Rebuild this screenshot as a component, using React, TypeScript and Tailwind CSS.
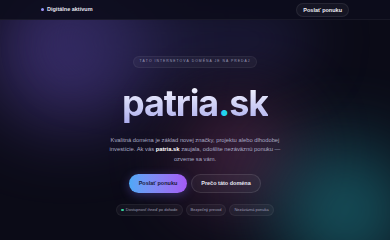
const chips = [
  { label: "Dostupnosť ihneď po dohode", dot: true },
  { label: "Bezpečný prevod", dot: false },
  { label: "Nezáväzná ponuka", dot: false },
];

export default function App() {
  return (
    <div
      className="relative h-[240px] w-[390px] overflow-hidden bg-[#0b0b17] text-white"
      style={{ fontFamily: "'Liberation Sans', Arial, sans-serif" }}
    >
      {/* glows */}
      <div className="pointer-events-none absolute -left-[10px] -top-[20px] h-[140px] w-[160px] rounded-full bg-[#4a3a8a] opacity-75 blur-[40px]" />
      <div className="pointer-events-none absolute left-[60px] top-[10px] h-[60px] w-[250px] rounded-full bg-[#2a2756] opacity-60 blur-[30px]" />
      <div className="pointer-events-none absolute left-[180px] top-[105px] h-[100px] w-[120px] rounded-full bg-[#5e2c52] opacity-65 blur-[35px]" />
      <div className="pointer-events-none absolute left-[280px] top-[150px] h-[120px] w-[130px] rounded-full bg-[#1a6e78] opacity-80 blur-[40px]" />

      <div className="relative flex h-full flex-col">
        <header className="border-b border-white/5 bg-[#0c0c1c]/90">
          <div className="mx-auto flex h-[19px] w-[308px] items-center justify-between">
            <div className="flex items-center gap-[3px]">
              <span className="h-[3px] w-[3px] rounded-full bg-gradient-to-br from-[#60a5fa] to-[#c084fc]" />
              <span className="text-[5.5px] font-semibold text-[#e4e4f0]">Digitálne aktívum</span>
            </div>
            <button className="mt-[1px] flex h-[14px] items-center rounded-full border border-white/[0.07] bg-white/[0.04] px-[6px] text-[5.5px] font-semibold text-[#ececf5]">
              Poslať ponuku
            </button>
          </div>
        </header>

        <main className="flex flex-col items-center">
          <div className="mt-[36px] flex h-[12px] items-center rounded-full border border-white/5 bg-white/[0.04] px-[5px] text-[3.4px] font-medium uppercase tracking-[0.3em] text-[#9a9ab8]">
            Táto internetová doména je na predaj
          </div>

          <h1
            className="mt-[13px] text-[36px] font-bold leading-[44px] tracking-[-0.03em]"
            style={{ fontFamily: "Inter, 'Liberation Sans', sans-serif" }}
          >
            <span className="bg-gradient-to-b from-[#ffffff] to-[#a9a9ec] bg-clip-text text-transparent">patria</span>
            <span className="text-[#22d3ee]">.</span>
            <span className="bg-gradient-to-b from-[#ffffff] to-[#a9a9ec] bg-clip-text text-transparent">sk</span>
          </h1>

          <p className="mt-[11px] w-[185px] text-center text-[5.8px] leading-[9.3px] text-[#a8a8c2]">
            Kvalitná doména je základ novej značky, projektu alebo dlhodobej investície. Ak vás{" "}
            <span className="font-bold text-white">patria.sk</span> zaujala, odošlite nezáväznú ponuku — ozveme sa vám.
          </p>

          <div className="mt-[10px] flex gap-[4px]">
            <button className="flex h-[19px] w-[58px] items-center justify-center rounded-full bg-gradient-to-r from-[#4ca8f6] to-[#a25af4] text-[5.5px] font-bold text-[#1a1a3a] shadow-[0_2px_10px_rgba(120,110,250,0.35)]">
              Poslať ponuku
            </button>
            <button className="flex h-[19px] w-[70px] items-center justify-center rounded-full border border-white/10 bg-white/[0.04] text-[5.5px] font-bold text-[#e6e6f2]">
              Prečo táto doména
            </button>
          </div>

          <div className="mt-[11px] flex gap-[3px]">
            {chips.map((c) => (
              <span
                key={c.label}
                className="flex h-[12px] items-center gap-[2px] rounded-full border border-white/5 bg-white/[0.04] px-[4px] text-[4px] text-[#9c9cb5]"
              >
                {c.dot && <span className="h-[2.5px] w-[2.5px] rounded-full bg-[#34d399]" />}
                {c.label}
              </span>
            ))}
          </div>
        </main>
      </div>
    </div>
  );
}
